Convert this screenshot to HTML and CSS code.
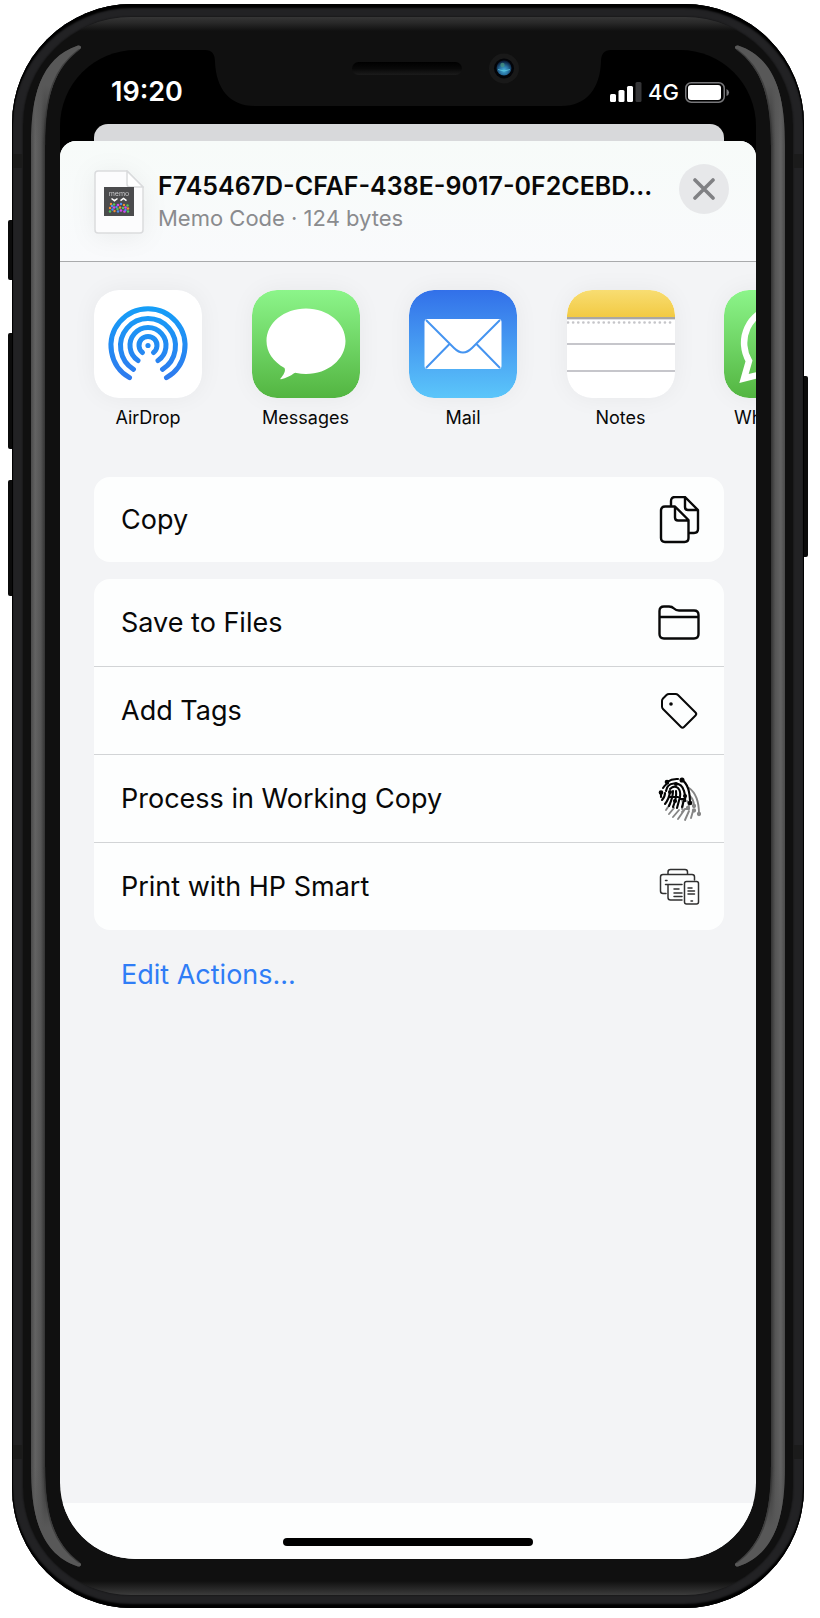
FILE: index.html
```html
<!DOCTYPE html>
<html lang="en">
<head>
<meta charset="utf-8">
<meta name="viewport" content="width=device-width, initial-scale=1">
<title>Share sheet</title>
<link rel="stylesheet" href="styles.css">
</head>
<body>
<svg class="defs" width="0" height="0" aria-hidden="true">
  <defs>
    <linearGradient id="shine" gradientUnits="userSpaceOnUse" x1="0" x2="14" y1="0" y2="0"><stop offset="0" stop-color="#4a4a4a"/><stop offset=".3" stop-color="#636363"/><stop offset=".7" stop-color="#555"/><stop offset="1" stop-color="#333"/></linearGradient>
    <linearGradient id="fade" gradientUnits="userSpaceOnUse" x1="0" x2="0" y1="40" y2="100"><stop offset="0" stop-color="#585858"/><stop offset="1" stop-color="#585858" stop-opacity="0"/></linearGradient>
    <symbol id="corner" viewBox="0 0 50 100"><g id="taper"><path fill="url(#shine)" d="M0 100C0 53 9 13 47 0.500C50 0 51 3 49 4C25 22 14 48 14 100Z"/><path fill="url(#fade)" d="M0 100C0 53 9 13 47 0.500C50 0 51 3 49 4C25 22 14 48 14 100Z"/><path d="M48 4.500C24 22 13.500 48 13.500 100" fill="none" stroke="#363636" stroke-width="1.500" opacity=".7"/></g></symbol>
  </defs>
</svg>
<div class="device">
  <span class="key key-mute"></span><span class="key key-up"></span><span class="key key-down"></span><span class="key key-power"></span>
  <span class="antenna top-left"></span><span class="antenna top-right"></span><span class="antenna bottom-left"></span><span class="antenna bottom-right"></span>
  <span class="rail left"></span><span class="rail right"></span>
  <svg class="corner top-left" aria-hidden="true"><use href="#corner"/></svg>
  <svg class="corner top-right" aria-hidden="true"><use href="#corner"/></svg>
  <svg class="corner bottom-left" aria-hidden="true"><use href="#corner"/></svg>
  <svg class="corner bottom-right" aria-hidden="true"><use href="#corner"/></svg>

  <div class="screen">
    <svg class="notch" viewBox="0 0 406 57" aria-hidden="true">
      <defs>
        <linearGradient id="speaker" x1="0" x2="0" y1="0" y2="1"><stop offset="0" stop-color="#000"/><stop offset=".5" stop-color="#080808"/><stop offset="1" stop-color="#1b1b1b"/></linearGradient>
        <radialGradient id="lens" cx=".5" cy=".65" r=".6"><stop offset="0" stop-color="#48b5dc"/><stop offset=".5" stop-color="#2770a0"/><stop offset="1" stop-color="#0a1d38"/></radialGradient>
      </defs>
      <path fill="#101010" d="M0 0C7 0 10 4 10 12C11 38 24 56 50 56H356C382 56 395 38 396 12C396 4 399 0 406 0Z"/>
      <rect x="147" y="12" width="110" height="13" rx="6.500" fill="url(#speaker)"/>
      <circle cx="299" cy="18.500" r="15" fill="#191919"/><circle cx="299" cy="18.500" r="10" fill="#030408"/><circle cx="299" cy="18" r="7.500" fill="url(#lens)"/>
      <path d="M293 19.500q6 3 12 0" stroke="#66d5e8" fill="none" opacity=".7"/><circle cx="297.500" cy="15" r="2.200" fill="#4a9a80" opacity=".7"/>
    </svg>

    <header class="status">
      <time class="clock">19:20</time>
      <div class="radio">
        <svg width="32" height="20" viewBox="0 0 32 20" aria-label="Signal" role="img"><g fill="#fff"><rect y="12" width="6" height="8" rx="1.500"/><rect x="8.500" y="8" width="6" height="12" rx="1.500"/><rect x="17" y="4" width="6" height="16" rx="1.500"/><rect x="25.500" width="6" height="20" rx="1.500" fill="#353537"/></g></svg>
        <span class="network">4G</span>
        <svg width="45" height="21" viewBox="0 0 45 21" aria-label="Battery" role="img"><rect x=".75" y=".75" width="38.500" height="19.500" rx="5.500" fill="none" stroke="#77777a" stroke-width="1.500"/><rect x="3" y="3" width="33" height="15" rx="3" fill="#fff"/><path d="M41.500 7q2.500 1 2.500 3.500t-2.500 3.500z" fill="#77777a"/></svg>
      </div>
    </header>

    <div class="behind"></div>
    <main class="sheet">
      <section class="file">
        <svg class="doc" width="50" height="65" viewBox="0 0 50 65" aria-hidden="true">
          <path d="M4 1H33L49 17V60q0 3-3 3H4q-3 0-3-3V4q0-3 3-3Z" fill="#fcfcfd" stroke="#dadbdd" stroke-width="1.500"/>
          <path d="M33 1V14q0 3 3 3H49Z" fill="#fff" stroke="#dadbdd" stroke-width="1.500"/>
          <rect x="10" y="17" width="30" height="29" fill="#4b4b4d"/>
          <text class="doc-text" x="25" y="26" text-anchor="middle">memo</text>
          <path d="m17.500 28.500 3 2.200L23.500 28.500M26.500 30.700l3-2.200 3 2.200" fill="none" stroke="#fff" stroke-width="1.500"/>
          <g stroke="none">
            <g fill="#f08c32"><circle cx="17" cy="34" r="1.200"/><circle cx="30" cy="35" r="1.200"/><circle cx="26" cy="37.500" r="1.200"/><circle cx="16" cy="38" r="1.200"/><circle cx="34" cy="38.500" r="1.200"/><circle cx="20.500" cy="41" r="1.200"/></g>
            <g fill="#4fc95c"><circle cx="20" cy="34.500" r="1.200"/><circle cx="33.500" cy="35.500" r="1.200"/><circle cx="23.500" cy="39" r="1.200"/><circle cx="29" cy="38" r="1.200"/><circle cx="16" cy="41.500" r="1.200"/><circle cx="34" cy="41.500" r="1.200"/></g>
            <g fill="#d445ef"><circle cx="24" cy="35" r="1.300"/><circle cx="20" cy="37.500" r="1.300"/><circle cx="31.500" cy="37.500" r="1.300"/><circle cx="27" cy="40.500" r="1.300"/><circle cx="30.500" cy="41.500" r="1.300"/></g>
            <g fill="#4c8df0"><circle cx="27" cy="34" r="1.200"/><circle cx="18" cy="36" r="1.200"/><circle cx="22.500" cy="37" r="1.200"/><circle cx="18.500" cy="39.500" r="1.200"/><circle cx="31.500" cy="40" r="1.200"/><circle cx="24" cy="41.500" r="1.200"/></g>
          </g>
        </svg>
        <div class="file-text">
          <h1>F745467D-CFAF-438E-9017-0F2CEBD...</h1>
          <p>Memo Code · 124 bytes</p>
        </div>
        <button class="close" type="button" aria-label="Close"><svg width="22" height="22" viewBox="0 0 22 22" aria-hidden="true"><path d="m2 2 18 18M20 2 2 20" stroke="#808184" stroke-width="3.600" stroke-linecap="round"/></svg></button>
      </section>

      <div class="body">
        <nav class="apps" aria-label="Apps">
          <button class="app" type="button">
            <svg viewBox="0 0 108 108" aria-hidden="true">
              <defs><linearGradient id="air" gradientUnits="userSpaceOnUse" x1="0" y1="16" x2="0" y2="91"><stop stop-color="#159ff8"/><stop offset="1" stop-color="#2f79ee"/></linearGradient></defs>
              <rect width="108" height="108" rx="25" fill="#fff"/>
              <g fill="none" stroke="url(#air)" stroke-width="5" stroke-linecap="round"><path d="M35.500 87.700A37 37 0 1 1 72.500 87.700"/><path d="M39.500 79.300A27.500 27.500 0 1 1 68.500 79.300"/><path d="M44 70.500A18 18 0 1 1 64 70.500"/><path d="M48.500 62.500A9 9 0 1 1 59.500 62.500"/></g><circle cx="54" cy="55.500" r="2.600" fill="#258bf4"/>
            </svg><span>AirDrop</span>
          </button>
          <button class="app" type="button">
            <svg viewBox="0 0 108 108" aria-hidden="true">
              <defs><linearGradient id="green" x1="0" y1="0" x2="0" y2="1"><stop stop-color="#8cf58a"/><stop offset="1" stop-color="#53b541"/></linearGradient></defs>
              <rect width="108" height="108" rx="25" fill="url(#green)"/>
              <path d="M54 18.500C32 18.500 14.500 33 14.500 51C14.500 62 21 71.500 32.500 78C34 81 31.500 85 28.500 88.500C28 89 28.500 89.500 29 89.300C34 88 38.500 86 42 83.200Q43 82.600 44.500 83Q49 84 54 84C76 84 93.500 69 93.500 51S76 18.500 54 18.500Z" fill="#fff"/>
            </svg><span>Messages</span>
          </button>
          <button class="app" type="button">
            <svg viewBox="0 0 108 108" aria-hidden="true">
              <defs><linearGradient id="blue" x1="0" y1="0" x2="0" y2="1"><stop stop-color="#3270e9"/><stop offset="1" stop-color="#5bc6fa"/></linearGradient></defs>
              <rect width="108" height="108" rx="25" fill="url(#blue)"/><rect x="15.500" y="29" width="77" height="50" rx="3" fill="#fff"/>
              <g fill="none" stroke="#4594f0" stroke-width="2"><path d="M17 30 45 58Q54 67 63 58L91 30M17 78 40.500 54M91 78 67.500 54"/></g>
            </svg><span>Mail</span>
          </button>
          <button class="app" type="button">
            <svg viewBox="0 0 108 108" aria-hidden="true">
              <defs><linearGradient id="yellow" x1="0" y1="0" x2="0" y2="1"><stop stop-color="#f8dd72"/><stop offset="1" stop-color="#f2ca43"/></linearGradient><clipPath id="round"><rect width="108" height="108" rx="25"/></clipPath></defs>
              <g clip-path="url(#round)"><rect width="108" height="108" fill="#fff"/><rect width="108" height="27" fill="url(#yellow)"/><path d="M0 28H108" stroke="#aaa7a2" stroke-width="2"/><path d="M0 29.500H108" stroke="#dedee1"/><path d="M1 32.500H108" stroke="#c5c5c9" stroke-width="2.600" stroke-linecap="round" stroke-dasharray=".1 5"/><path d="M0 54H108M0 81H108" stroke="#c6c6cb" stroke-width="2"/></g>
            </svg><span>Notes</span>
          </button>
          <button class="app" type="button">
            <svg viewBox="0 0 108 108" aria-hidden="true">
              <rect width="108" height="108" rx="25" fill="url(#green)"/><path d="M20 88.500 25 71A36 36 0 1 1 38 84Z" fill="none" stroke="#fff" stroke-width="6.500"/><path d="M40 37q4-4 7 0l4 8-4 6q5 10 15 14l5-5 10 5q0 10-10 11Q50 74 39 53Q35 43 40 37Z" fill="#fff"/>
            </svg><span>WhatsApp</span>
          </button>
        </nav>

        <section class="actions">
          <div class="card"><button class="row copy" type="button"><span>Copy</span>
            <svg class="icon" viewBox="0 0 44 48" fill="none" stroke="#080808" stroke-width="2.400" stroke-linejoin="round" aria-hidden="true"><path d="M13 11V5q0-4 4-4H27L40 14V33q0 4-4 4H31M27 1V11q0 3 3 3H40"/><path d="M7 10.500H17L30.500 24V42q0 4-4 4H7q-4 0-4-4V14.500q0-4 4-4ZM17 10.500V21.500q0 3 3 3H30.500"/></svg></button></div>
          <div class="card">
            <button class="row" type="button"><span>Save to Files</span>
              <svg class="icon" viewBox="0 0 44 48" fill="none" stroke="#080808" stroke-width="2.400" stroke-linejoin="round" aria-hidden="true"><path d="M6 7.500H11Q14 7.500 16 9.500Q18 11.500 21 11.500H36q4.500 0 4.500 4.500V35q0 4.500-4.500 4.500H6q-4.500 0-4.500-4.500V12Q1.500 7.500 6 7.500ZM1.500 18H40.500"/></svg></button>
            <button class="row" type="button"><span>Add Tags</span>
              <svg class="icon" viewBox="0 0 44 48" fill="none" stroke="#080808" stroke-width="2" stroke-linejoin="round" aria-hidden="true"><path d="M11 7H17.500Q19 7 20 8L37.500 25.500Q39 27 37.500 28.500L26 40Q24.500 41.500 23 40L5 22Q4 21 4 19.500V14Q4 12.500 5 11.500L8.500 8Q9.500 7 11 7Z"/><circle cx="13" cy="17" r="1.800" fill="#080808" stroke="none"/></svg></button>
            <button class="row" type="button"><span>Process in Working Copy</span>
              <svg class="icon" viewBox="0 0 44 48" fill="none" stroke-width="1.900" stroke-linecap="round" aria-hidden="true">
                <g stroke="#858585"><path d="M31 13Q41 20 41 39M32 21Q36 25 36 31M35 36 33 43M31 36 27 45M27 34 20 44M21 35 15 42M16 33 11 39M12 29 8 35M24 25Q26 30 24 34M29 26Q32 30 30 33M24 37 27 34H31"/><circle cx="41" cy="39" r="1.200" fill="#858585"/><circle cx="36" cy="31" r="1.200" fill="#858585"/><circle cx="36" cy="35.500" r="1.200" fill="#858585"/><circle cx="30" cy="33" r="1.200" fill="#858585"/></g>
                <g stroke="#050505" stroke-width="2.100"><path d="M9 7Q14 3.500 20 4M24 5Q32 10 32 28M3 17V22M5 13Q7 10 10 8M8 16Q9 9 16 8.500Q24 8 26 16Q28 21 27 26M12 14Q16 10 20 13Q23 16 22 22L19 33M7 18Q7 22 4 25M12 17Q11 24 7 29M15 16Q15 22 11 31M18 16Q19 22 15 32M26 25 24 32M12 22H20M22 24H27"/><circle cx="24" cy="5" r="1.500" fill="#050505"/><circle cx="9" cy="7" r="1.300" fill="#050505"/><circle cx="3" cy="17.500" r="1.300" fill="#050505"/><circle cx="32" cy="28" r="1.300" fill="#050505"/><circle cx="12" cy="17" r="1" fill="#050505"/><circle cx="27" cy="21" r="1" fill="#050505"/><circle cx="18" cy="9" r="1" fill="#050505"/><circle cx="17" cy="26" r="1" fill="#050505"/></g>
              </svg></button>
            <button class="row" type="button"><span>Print with HP Smart</span>
              <svg class="icon" viewBox="0 0 44 48" fill="none" stroke="#303030" stroke-width="1.500" stroke-linecap="round" stroke-linejoin="round" aria-hidden="true"><path d="M10 11.500V9q0-2.500 2.500-2.500H27q2.500 0 2.500 2.500V11.500M8 30.500H5q-2.500 0-2.500-2.500V14Q2.500 11.500 5 11.500H34q2.500 0 2.500 2.500V17M7.500 17.500h1.500M7.500 21.500H24M10 21.500V34.500q0 2.500 2.500 2.500H24M16 26h5M16 30h8M16 33.500h8"/><rect x="26.500" y="18.500" width="14" height="22.500" rx="2" fill="#fff"/><path d="M30 25h4M30 28h6.500M30 31h6.500M33 38h1.500"/></svg></button>
          </div>
          <a class="edit" href="#">Edit Actions...</a>
        </section>
      </div>
      <footer class="home"><span></span></footer>
    </main>
  </div>
</div>
</body>
</html>
```
FILE: styles.css
```css
* { box-sizing: border-box; }

body {
  display: flex;
  min-height: 100vh;
  margin: 0;
  padding: 4px 16px 10px 12px;
  background: #fff;
  color: #080808;
  font-family: Inter, "Noto Sans", sans-serif;
}

button {
  margin: 0;
  padding: 0;
  border: 0;
  background: none;
  color: inherit;
  font: inherit;
}

.defs { position: absolute; }

/* Phone body */
.device {
  position: relative;
  display: flex;
  flex: 1;
  min-width: 0;
  padding: 46px 48px 49px;
  border-radius: 120px;
  background: #222224;
  box-shadow: inset 0 0 0 1px #000, inset 0 4px 2px #000, inset 0 -4px 2px #000;
}

.device::before {
  content: "";
  position: absolute;
  inset: 13px 11px;
  border-radius: 108px;
  background: linear-gradient(#363636, #282828 6px, #101010 14px, #101010 calc(100% - 14px), #282828 calc(100% - 6px), #3c3c3c);
  box-shadow: 0 0 2px #0a0a0a;
}

.key {
  position: absolute;
  left: -4px;
  width: 4px;
  border-radius: 2px 0 0 2px;
  background: #0b0b0b;
}
.key-mute { top: 216px; height: 60px; }
.key-up { top: 329px; height: 116px; }
.key-down { top: 476px; height: 116px; }
.key-power { top: 372px; right: -4px; left: auto; height: 181px; border-radius: 0 2px 2px 0; }

.antenna { position: absolute; width: 10px; height: 14px; background: #1b1b1b; }
.antenna.top-left { top: 150px; left: 1px; }
.antenna.top-right { top: 150px; right: 1px; }
.antenna.bottom-left { bottom: 149px; left: 1px; }
.antenna.bottom-right { bottom: 149px; right: 1px; }

.rail {
  position: absolute;
  top: 141px;
  bottom: 141px;
  width: 14px;
  background: linear-gradient(90deg, #4a4a4a, #636363 30%, #555 70%, #333);
}
.rail.left { left: 19px; }
.rail.right { right: 19px; transform: scaleX(-1); }

.corner { position: absolute; width: 50px; height: 100px; }
.corner.top-left { top: 41px; left: 19px; }
.corner.top-right { top: 41px; right: 19px; transform: scaleX(-1); }
.corner.bottom-left { bottom: 41px; left: 19px; transform: scaleY(-1); }
.corner.bottom-right { right: 19px; bottom: 41px; transform: scale(-1); }

/* Screen */
.screen {
  position: relative;
  display: flex;
  flex: 1;
  flex-direction: column;
  min-width: 0;
  overflow: hidden;
  border-radius: 76px;
  background: #000;
}

.notch {
  position: absolute;
  top: 0;
  left: 50%;
  width: 406px;
  height: 57px;
  transform: translateX(-50%);
}

.status {
  display: flex;
  justify-content: space-between;
  align-items: flex-start;
  height: 74px;
  padding: 26px 26px 0 51px;
  color: #fff;
}
.clock { font-size: 27px; font-weight: 600; line-height: 32px; }
.radio { display: flex; align-items: center; gap: 6px; height: 32px; }
.network { font-size: 22px; font-weight: 500; line-height: 32px; }

.behind {
  height: 17px;
  margin: 0 32px 0 34px;
  border-radius: 14px 14px 0 0;
  background: #d8d9db;
}

.sheet {
  display: flex;
  flex: 1;
  flex-direction: column;
  overflow: hidden;
  border-radius: 16px 16px 0 0;
  background: #f3f4f6;
}

.file {
  display: flex;
  align-items: flex-start;
  padding: 23px 27px 26px 34px;
  border-bottom: 1px solid #a9aaac;
  background: linear-gradient(#f7fbf9, #f9fafc);
}
.doc { flex: none; margin-top: 6px; filter: drop-shadow(0 3px 12px rgba(0, 0, 0, .06)); }
.doc-text { fill: #c8c8ca; font-size: 7px; }
.file-text { flex: 1; min-width: 0; padding: 6px 0 0 14px; }
.file-text h1 { margin: 0; font-size: 25px; font-weight: 600; line-height: 32px; white-space: nowrap; }
.file-text p { margin: 0; color: #8a8b8e; font-size: 22px; line-height: 32px; white-space: nowrap; }
.close {
  display: grid;
  flex: none;
  place-items: center;
  width: 50px;
  height: 50px;
  border-radius: 50%;
  background: #e7e8ea;
}

/* App row and actions */
.body { flex: 1; padding: 28px 32px 0 34px; }
.apps { display: grid; grid-auto-columns: 25%; grid-auto-flow: column; }
.app { display: flex; flex-direction: column; align-items: center; width: 108px; }
.app svg { width: 108px; height: 108px; border-radius: 25px; box-shadow: 0 0 24px rgba(0, 0, 0, .05); }
.app span { margin-top: 8px; font-size: 18px; line-height: 24px; }

.actions { display: flex; flex-direction: column; gap: 17px; margin-top: 47px; }
.card { overflow: hidden; border-radius: 16px; background: #fdfefe; }
.row {
  display: flex;
  justify-content: space-between;
  align-items: center;
  width: 100%;
  height: 87px;
  padding: 0 22px 0 27px;
  font-size: 27px;
  line-height: 36px;
  text-align: left;
}
.row.copy { height: 85px; }
.row + .row { height: 88px; border-top: 1px solid #d2d4d6; }
.icon { flex: none; width: 44px; height: 48px; }
.edit { margin: 10px 27px; color: #2f7df6; font-size: 27px; line-height: 36px; text-decoration: none; }

.home { display: flex; justify-content: center; padding: 35px 0 13px; background: #fdfefe; }
.home span { width: 36%; height: 8px; border-radius: 4px; background: #000; }
```
